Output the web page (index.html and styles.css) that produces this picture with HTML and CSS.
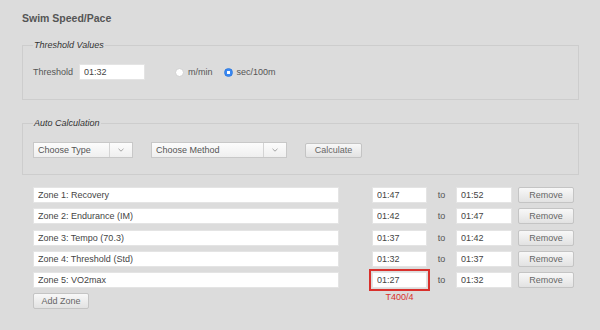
FILE: index.html
```html
<!DOCTYPE html>
<html lang="en">
  <head>
    <meta charset="UTF-8" />
    <meta name="viewport" content="width=device-width, initial-scale=1.0" />
    <title>Swim Speed/Pace</title>
    <link rel="stylesheet" href="styles.css">
  </head>
  <body>
    <h1 class="title">Swim Speed/Pace</h1>

    <fieldset class="group group-threshold">
      <legend>Threshold Values</legend>
      <div class="row">
        <label class="label" for="threshold">Threshold</label>
        <input id="threshold" class="field field-threshold" value="01:32" />
        <label class="radio radio-first"><span class="dot"></span>m/min</label>
        <label class="radio checked"><span class="dot"></span>sec/100m</label>
      </div>
    </fieldset>

    <fieldset class="group group-auto">
      <legend>Auto Calculation</legend>
      <div class="row">
        <div class="select select-type">
          <span class="select-text">Choose Type</span>
          <span class="select-arrow">
            <svg width="6" height="4" viewBox="0 0 6 4"><polyline points="0.5,0.8 3,3.2 5.5,0.8" fill="none" stroke="#9a9a9a" stroke-width="0.9" /></svg>
          </span>
        </div>
        <div class="select select-method">
          <span class="select-text">Choose Method</span>
          <span class="select-arrow">
            <svg width="6" height="4" viewBox="0 0 6 4"><polyline points="0.5,0.8 3,3.2 5.5,0.8" fill="none" stroke="#9a9a9a" stroke-width="0.9" /></svg>
          </span>
        </div>
        <button class="btn btn-calc">Calculate</button>
      </div>
    </fieldset>

    <div class="zones">
      <div class="zone">
        <input class="field zone-name" value="Zone 1: Recovery" />
        <span class="slot"><input class="field zone-from" value="01:47" /></span>
        <span class="to">to</span>
        <input class="field zone-to" value="01:52" />
        <button class="btn remove">Remove</button>
      </div>
      <div class="zone">
        <input class="field zone-name" value="Zone 2: Endurance (IM)" />
        <span class="slot"><input class="field zone-from" value="01:42" /></span>
        <span class="to">to</span>
        <input class="field zone-to" value="01:47" />
        <button class="btn remove">Remove</button>
      </div>
      <div class="zone">
        <input class="field zone-name" value="Zone 3: Tempo (70.3)" />
        <span class="slot"><input class="field zone-from" value="01:37" /></span>
        <span class="to">to</span>
        <input class="field zone-to" value="01:42" />
        <button class="btn remove">Remove</button>
      </div>
      <div class="zone">
        <input class="field zone-name" value="Zone 4: Threshold (Std)" />
        <span class="slot"><input class="field zone-from" value="01:32" /></span>
        <span class="to">to</span>
        <input class="field zone-to" value="01:37" />
        <button class="btn remove">Remove</button>
      </div>
      <div class="zone">
        <input class="field zone-name" value="Zone 5: VO2max" />
        <span class="slot">
          <input class="field zone-from flagged" value="01:27" />
          <span class="flag-note">T400/4</span>
        </span>
        <span class="to">to</span>
        <input class="field zone-to" value="01:32" />
        <button class="btn remove">Remove</button>
      </div>
    </div>

    <button class="btn add-zone">Add Zone</button>
  </body>
</html>
```

FILE: styles.css
```css
body {
  margin: 0;
  padding: 12px 21px 0 22px;
  background-color: #dcdcdc;
  font-family: "Liberation Sans", Arial, sans-serif;
  font-size: 9px;
  color: #555;
}

.title {
  margin: 0 0 14px;
  font-size: 10.5px;
  line-height: 13px;
  font-weight: bold;
  color: #555;
}

.group {
  margin: 0;
  width: 557px;
  box-sizing: border-box;
  border: 1px solid #cdcdcd;
  padding: 13px 10px 19px;
}

.group legend {
  padding: 0 1px;
  font-style: italic;
  font-size: 9px;
  line-height: 12px;
  color: #333;
}

.group-auto {
  margin-top: 17px;
  padding-bottom: 16px;
}

.row {
  display: flex;
  align-items: center;
  height: 16px;
}

.field {
  box-sizing: border-box;
  height: 16px;
  margin: 0;
  padding: 0 4px;
  border: 1px solid #e4e4e4;
  background-color: #fff;
  font: inherit;
  color: #444;
  outline: none;
}

.field-threshold {
  width: 66px;
  margin-left: 6px;
}

.radio {
  display: flex;
  align-items: center;
  gap: 4px;
  margin-left: 11px;
}

.radio-first {
  margin-left: 30px;
}

.dot {
  width: 9px;
  height: 9px;
  box-sizing: border-box;
  border-radius: 50%;
  border: 1px solid #d0d0d0;
  background-color: #fff;
}

.checked .dot {
  border-color: #2f7be0;
  background: radial-gradient(circle, #fff 0 1.4px, #3a88f2 1.9px);
}

.select {
  display: flex;
  height: 16px;
  box-sizing: border-box;
  border: 1px solid #c8c8c8;
  background: linear-gradient(#fcfcfc, #efefef);
  color: #555;
}

.select-text {
  flex: 1;
  padding-left: 4px;
  line-height: 14px;
}

.select-arrow {
  width: 22px;
  border-left: 1px solid #d4d4d4;
  display: flex;
  align-items: center;
  justify-content: center;
}

.select-type {
  width: 100px;
}

.select-method {
  width: 136px;
  margin-left: 18px;
}

.btn {
  box-sizing: border-box;
  height: 16px;
  margin: 0;
  padding: 0;
  border: 1px solid #c4c4c4;
  border-radius: 2px;
  background: linear-gradient(#f8f8f8, #e2e2e2);
  font: inherit;
  color: #666;
}

.btn-calc {
  width: 57px;
  height: 15px;
  margin-left: 18px;
}

.zones {
  margin: 12px 0 0 11px;
  display: flex;
  flex-direction: column;
  gap: 5.25px;
}

.zone {
  display: flex;
  align-items: center;
  height: 16px;
}

.zone-name {
  width: 306px;
}

.slot {
  position: relative;
  display: flex;
  margin-left: 33px;
}

.zone-from {
  width: 55px;
}

.flagged {
  outline: 2px solid #d9302c;
  outline-offset: 1px;
}

.flag-note {
  position: absolute;
  top: 100%;
  left: 0;
  right: 0;
  margin-top: 4px;
  line-height: 11px;
  text-align: center;
  color: #d9302c;
}

.to {
  width: 29px;
  text-align: center;
  color: #555;
}

.zone-to {
  width: 56px;
}

.remove {
  width: 56px;
  margin-left: 6px;
}

.add-zone {
  display: block;
  width: 56px;
  margin: 5px 0 0 11px;
}
```
